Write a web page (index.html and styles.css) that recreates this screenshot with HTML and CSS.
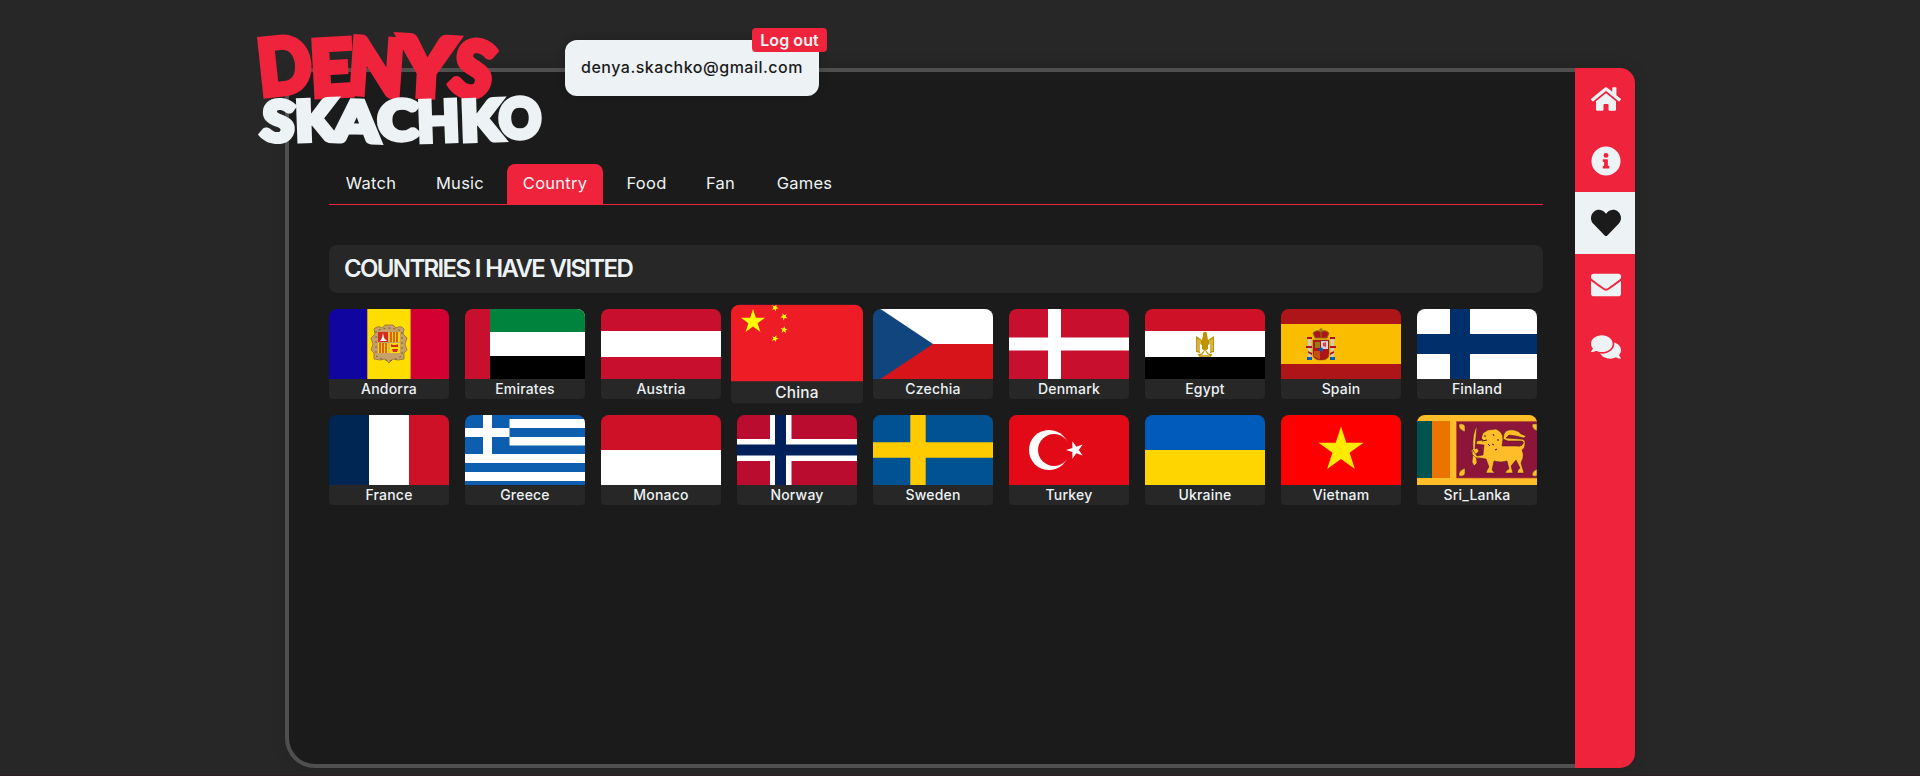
FILE: index.html
```html
<!DOCTYPE html>
<html lang="en">
<head>
<meta charset="utf-8">
<title>Denys Skachko</title>
<link rel="stylesheet" href="styles.css">
</head>
<body>
<div class="frame">
  <svg class="logo" viewBox="0 0 960 420">
    <g class="logo-first" text-anchor="middle">
      <text transform="translate(142 219) rotate(-6)" textLength="160" lengthAdjust="spacingAndGlyphs">D</text>
      <text transform="translate(279 226) rotate(-3)" textLength="128" lengthAdjust="spacingAndGlyphs">E</text>
      <text transform="translate(404 223) rotate(4)" textLength="166" lengthAdjust="spacingAndGlyphs">N</text>
      <text class="tall" transform="translate(556 228) rotate(3)" textLength="172" lengthAdjust="spacingAndGlyphs">Y</text>
      <text transform="translate(680 227) rotate(14)" textLength="122" lengthAdjust="spacingAndGlyphs">S</text>
    </g>
    <g class="logo-last" text-anchor="middle">
      <text transform="translate(109 363) rotate(6)" textLength="98" lengthAdjust="spacingAndGlyphs">S</text>
      <text transform="translate(229 361) rotate(-2)" textLength="124" lengthAdjust="spacingAndGlyphs">K</text>
      <text transform="translate(348 364) rotate(2)" textLength="136" lengthAdjust="spacingAndGlyphs">A</text>
      <text transform="translate(474 359)" textLength="122" lengthAdjust="spacingAndGlyphs">C</text>
      <text transform="translate(597 363) rotate(-2)" textLength="126" lengthAdjust="spacingAndGlyphs">H</text>
      <text transform="translate(726 361) rotate(-2)" textLength="124" lengthAdjust="spacingAndGlyphs">K</text>
      <text transform="translate(840 355)" textLength="126" lengthAdjust="spacingAndGlyphs">O</text>
    </g>
  </svg>
  <div class="account"><span>denya.skachko@gmail.com</span><button class="logout">Log out</button></div>
  <main class="content">
    <div class="tabs">
      <a class="tab t-watch">Watch</a><a class="tab t-music">Music</a><a class="tab t-country active">Country</a><a class="tab t-food">Food</a><a class="tab t-fan">Fan</a><a class="tab t-games">Games</a>
    </div>
    <h1 class="heading"><span>COUNTRIES I HAVE VISITED</span></h1>
    <div class="flags">
      <div class="card"><svg viewBox="0 0 120 70"><path fill="#10069f" d="M0 0h39v70H0z"/><path fill="#fedd00" d="M38.500 0h43v70h-43z"/><path fill="#d50032" d="M81.500 0H120v70H81.500z"/><path fill="#d5a12a" d="M38 0h.8v70H38zM81 0h.8v70H81z"/>
        <path fill="#c6a068" stroke="#94703e" stroke-width=".8" d="M45 20q4-4 8-1l3-3h8l3 3q5-3 8 1l-1 5 4 4-2 6 2 6-3 3v6l-6 1-5-1-4 4-4-4-5 1-6-1v-6l-3-3 2-6-2-6 4-4z"/><path fill="none" stroke="#7d5c38" stroke-width="1" stroke-dasharray="2 3" d="M47 22v25l6 3 7 2 7-2 6-3V22l-6-2-7-1-7 1z"/><path fill="#fedd00" d="M49 23h22v21H49z"/><path fill="#d52b1e" d="M49 23h10v10H49z"/><path stroke="#d52b1e" stroke-width="1.400" d="M62 23v10m3-10v10m3-10v10M51 34v10m3-10v10m3-10v10"/><path fill="#fff" d="m51 32 2-3 1-5 1 5 3 3z"/><path fill="#d52b1e" d="M62 35l2 1h3l2-1v3h-7zm1 5h6l-1 3h-4z"/><path fill="none" stroke="#c6a068" d="M60 23v21M49 33.500h22"/></svg><p>Andorra</p></div>
      <div class="card"><svg viewBox="0 0 120 70"><path fill="#fff" d="M25 0h95v70H25z"/><path fill="#00843d" d="M25 0h95v23H25z"/><path d="M25 47h95v23H25z"/><path fill="#c8102e" d="M0 0h25v70H0z"/></svg><p>Emirates</p></div>
      <div class="card"><svg viewBox="0 0 120 70"><path fill="#c8102e" d="M0 0h120v70H0z"/><path fill="#fff" d="M0 22h120v26H0z"/></svg><p>Austria</p></div>
      <div class="card hovered"><svg viewBox="0 0 120 70"><defs><path id="star" d="M0-1 .2245-.309.951-.309.363.118.588.809 0 .382-.588.809-.363.118-.951-.309-.2245-.309z"/></defs><path fill="#ee1c25" d="M0 0h120v70H0z"/><g fill="#ff0"><use href="#star" transform="translate(20 15.700) scale(11.500)"/><use href="#star" transform="translate(40 3) rotate(24) scale(3.500)"/><use href="#star" transform="translate(48.200 11) rotate(45) scale(3.500)"/><use href="#star" transform="translate(48.200 23) scale(3.500) rotate(6)"/><use href="#star" transform="translate(40 31) rotate(22) scale(3.500)"/></g></svg><p>China</p></div>
      <div class="card"><svg viewBox="0 0 120 70"><path fill="#fff" d="M7 0h113v35H7z"/><path fill="#d7141a" d="M7 35h113v35H7z"/><path fill="#11457e" d="M0 0h7.500L60 35 7.500 70H0z"/></svg><p>Czechia</p></div>
      <div class="card"><svg viewBox="0 0 120 70"><path fill="#c8102e" d="M0 0h120v70H0z"/><path fill="#fff" d="M39 0h13v70H39z"/><path fill="#fff" d="M0 28.500h120v13H0z"/></svg><p>Denmark</p></div>
      <div class="card"><svg viewBox="0 0 120 70"><path fill="#ce1126" d="M0 0h120v22H0z"/><path fill="#fff" d="M0 22h120v26H0z"/><path d="M0 48h120v22H0z"/><path fill="#c09300" d="M51 27l6 4 1-5q-1-2 1-3 3-1 3 2l1 6 6-4v16l-4 1v-9l-2 1v4l-3 2-3-2v-4l-2-1v9l-4-1z"/><path stroke="#fff" stroke-width=".6" d="M53 30v12m2-11v12m10-12v12m2-13v12"/><path fill="none" stroke="#c09300" stroke-width="1.300" d="M53 46l4-1 2-3m8 4-4-1-2-3M54 47h12"/></svg><p>Egypt</p></div>
      <div class="card"><svg viewBox="0 0 120 70"><path fill="#ad1519" d="M0 0h120v70H0z"/><path fill="#fabd00" d="M0 15h120v40H0z"/><path fill="#ccc" d="M27 30h3v20h-3zM50 30h3v20h-3z"/><path fill="#ad1519" d="M26 28h5v2h-5zm23 0h5v2h-5zM25 37h6v2h-6zm24 0h6v2h-6zm-22 5 4 2v2l-4-2zm26 0-4 2v2l4-2z"/><path fill="#005bbf" d="M26 48h5v3h-5zm23 0h5v3h-5z"/><path fill="#ad1519" stroke="#704214" stroke-width=".5" d="M32 31h16v14q0 6-8 6t-8-6z"/><path fill="#9b7a12" d="M34 33h5v6h-5z"/><path fill="#d6cdd8" d="M40 32h7v8h-7z"/><path fill="#db4446" d="M42 34l3-1v5l-3-1z"/><path stroke="#e6b000" stroke-width=".8" d="M34 42v6m2-6v7m2-7v8"/><circle cx="40" cy="40.500" r="2" fill="#005bbf"/><path fill="#ad1519" stroke="#8a6914" stroke-width="1" d="M34 29l-2-5q4-4 8-1 4-3 8 1l-2 5z"/><path stroke="#8a6914" stroke-width="1.200" d="M40 19v9m-2-7h4"/></svg><p>Spain</p></div>
      <div class="card"><svg viewBox="0 0 120 70"><path fill="#fff" d="M0 0h120v70H0z"/><path fill="#002f6c" d="M33 0h20v25h67v20H53v25H33V45H0V25h33z"/></svg><p>Finland</p></div>
      <div class="card"><svg viewBox="0 0 120 70"><path fill="#fff" d="M40 0h40v70H40z"/><path fill="#002654" d="M0 0h40v70H0z"/><path fill="#ce1126" d="M80 0h40v70H80z"/></svg><p>France</p></div>
      <div class="card"><svg viewBox="0 0 120 70"><path fill="#fff" d="M18 0h9v4h93v66H0V13h18z"/><path fill="#0d5eaf" d="M0 0h18v13H0zM27 0h93v4H44.500v9H27zM44.500 13H120v9H44.500zM0 22h18v17H0zM27 22h17.500v8.500H120V39H27zM0 48h120v9H0zM0 66h120v4H0z"/></svg><p>Greece</p></div>
      <div class="card"><svg viewBox="0 0 120 70"><path fill="#fff" d="M0 35h120v35H0z"/><path fill="#ce1126" d="M0 0h120v35H0z"/></svg><p>Monaco</p></div>
      <div class="card"><svg viewBox="0 0 120 70"><path fill="#ba0c2f" d="M0 0h120v70H0z"/><path fill="#fff" d="M33 0h21.500v24H120v22H54.500v24H33V46H0V24h33z"/><path fill="#00205b" d="M38 0h11v29.500h71v11H49V70H38V40.500H0v-11h38z"/></svg><p>Norway</p></div>
      <div class="card"><svg viewBox="0 0 120 70"><path fill="#005293" d="M0 0h120v70H0z"/><path fill="#fecb00" d="M37.300 0h15.400v27.300H120v15.400H52.700V70H37.300V42.700H0V27.300h37.300z"/></svg><p>Sweden</p></div>
      <div class="card"><svg viewBox="0 0 120 70"><path fill="#e30a17" d="M0 0h120v70H0z"/><circle cx="40" cy="35" r="20" fill="#fff"/><circle cx="45" cy="35" r="16" fill="#e30a17"/><use href="#star" fill="#fff" transform="translate(66.200 35) rotate(-90) scale(9.200)"/></svg><p>Turkey</p></div>
      <div class="card"><svg viewBox="0 0 120 70"><path fill="#005bbb" d="M0 0h120v35H0z"/><path fill="#ffd500" d="M0 35h120v35H0z"/></svg><p>Ukraine</p></div>
      <div class="card"><svg viewBox="0 0 120 70"><path fill="red" d="M0 0h120v70H0z"/><use href="#star" fill="#ffeb00" transform="translate(60 35) scale(23.600)"/></svg><p>Vietnam</p></div>
      <div class="card"><svg viewBox="0 0 120 70"><path fill="#ffbe29" d="M0 0h120v70H0z"/><path fill="#00534e" d="M0 6h15v57H0z"/><path fill="#eb7400" d="M15 6h18v57H15z"/><path fill="#8d153a" stroke="#b64b2d" stroke-width=".7" d="M39.500 6.500H121v56.500H39.500z"/>
        <g fill="#ffbe29" stroke="#45152a" stroke-width=".5"><path d="M42 9q5-1 6 2v6q-5-2-6-5zM42 61q5 1 6-2v-6q-5 2-6 5zM120 9q-4-1-5 1 0 4 5 6zM120 61q-4 1-5-1 0-4 5-6z"/><path d="M60 11q-5 7-4 23l-2 2 2 3-1 8 2 4 3-3-1-9 3-3-2-3-2 1q1-12 2-23z"/><path d="M64 24l2-6 5-3 8-1q7 3 7 10l-1 7h15q3 1 5-1 3-3 0-4H91l-5-2 1-5q2-5 10-4 5 1 7 4l5 2-2 2-8-2-7-1-3 3 14 1q6 0 5 5 0 4-3 6 2 4 1 8l-2 5 3 10h-7l1-3 2-2-4-8-5 6 2 7h-8l2-3 2-1-2-8q-6 2-13 0l-2 9 3 3h-9l1-3 2-3-3-8-6-1q-5 1-8-4l1-4 4 6 6-1 1-10-8-1 1-3 6-1-2-2z"/></g><path fill="none" stroke="#45152a" stroke-width="1" d="M67 21h2m-4 5 5-1m1 4 2 2m3-12 1 2m4 3v2m-6 3 2 1m1 5 2-1"/></svg><p>Sri_Lanka</p></div>
    </div>
  </main>
  <nav class="side">
    <a><svg viewBox="0 0 576 512"><path d="M280.400 148.300 96 300.100V464a16 16 0 0 0 16 16l112-.3a16 16 0 0 0 16-16V368a16 16 0 0 1 16-16h64a16 16 0 0 1 16 16v95.600a16 16 0 0 0 16 16.100l112 .3a16 16 0 0 0 16-16V300L295.700 148.300a12.200 12.200 0 0 0-15.300 0zM571.600 251.500 488 182.600V44a12 12 0 0 0-12-12h-56a12 12 0 0 0-12 12v72.600L318.500 43a48 48 0 0 0-61 0L4.300 251.500a12 12 0 0 0-1.600 16.900l25.500 31a12 12 0 0 0 16.900 1.600l235.200-193.700a12.200 12.200 0 0 1 15.300 0L530.900 301a12 12 0 0 0 16.900-1.600l25.500-31a12 12 0 0 0-1.700-16.900z"/></svg></a>
    <a><svg viewBox="0 0 512 512"><path fill-rule="evenodd" d="M256 8a248 248 0 1 0 0 496 248 248 0 0 0 0-496zm0 110a42 42 0 1 1 0 84 42 42 0 0 1 0-84zm56 254a12 12 0 0 1-12 12h-88a12 12 0 0 1-12-12v-24a12 12 0 0 1 12-12h12v-64h-12a12 12 0 0 1-12-12v-24a12 12 0 0 1 12-12h64a12 12 0 0 1 12 12v100h12a12 12 0 0 1 12 12z"/></svg></a>
    <a class="active"><svg viewBox="0 0 512 512"><path d="M462.300 62.600C407.500 15.900 326 24.300 275.700 76.200L256 96.500l-19.700-20.300C186.100 24.300 104.500 15.900 49.700 62.600c-62.800 53.600-66.100 149.800-9.900 207.900l193.500 199.800c12.500 12.900 32.800 12.900 45.300 0l193.500-199.800c56.300-58.100 53-154.300-9.800-207.900z"/></svg></a>
    <a><svg viewBox="0 0 512 512"><path d="M502.300 190.800c3.900-3.100 9.700-.2 9.700 4.700V400a48 48 0 0 1-48 48H48a48 48 0 0 1-48-48V195.600c0-5 5.700-7.800 9.700-4.700 22.400 17.400 52.100 39.500 154.100 113.600 21.100 15.400 56.700 47.800 92.200 47.600 35.700.3 72-32.800 92.300-47.600 102-74.100 131.600-96.300 154-113.700zM256 320c23.200.4 56.600-29.200 73.400-41.400 132.700-96.300 142.800-104.700 173.400-128.700A24 24 0 0 0 512 131v-19a48 48 0 0 0-48-48H48a48 48 0 0 0-48 48v19c0 7.400 3.400 14.300 9.200 18.900 30.600 23.900 40.700 32.400 173.400 128.700 16.800 12.200 50.200 41.800 73.400 41.400z"/></svg></a>
    <a><svg viewBox="0 0 576 512"><path d="M416 192c0-88.400-93.100-160-208-160S0 103.600 0 192c0 34.300 14.100 65.900 38 92-13.400 30.200-35.500 54.200-35.800 54.500A8 8 0 0 0 8 352c36.600 0 66.900-12.300 88.700-25 32.200 15.700 70.300 25 111.300 25 114.900 0 208-71.600 208-160zm122 220c23.900-26 38-57.700 38-92 0-66.900-53.500-124.200-129.300-148.100.9 6.600 1.300 13.300 1.300 20.100 0 105.900-107.700 192-240 192-10.800 0-21.300-.8-31.700-1.900C207.800 439.600 281.800 480 368 480c41 0 79.100-9.200 111.300-25 21.800 12.700 52.100 25 88.700 25a8 8 0 0 0 5.800-13.500c-.3-.3-22.400-24.200-35.800-54.500z"/></svg></a>
  </nav>
</div>
</body>
</html>
```
FILE: styles.css
```css
* { box-sizing: border-box; margin: 0; }
body {
  height: 776px;
  padding-top: 68px;
  background: #272727;
  border-bottom: 1px solid #2a1f25;
  color: #edf2f4;
  font-family: Inter, "Open Sans", sans-serif;
  overflow: hidden;
}
.frame {
  position: relative;
  display: flex;
  width: 1350px;
  height: 700px;
  margin: 0 auto;
  border-radius: 15px 15px 15px 30px;
  box-shadow: 0 0 16px rgba(0, 0, 0, .12);
}
.content {
  flex: 1;
  padding: 92px 32px 0 40px;
  background: #1b1b1b;
  border: 4px solid #4f4f4f;
  border-right: 0;
  border-radius: 30px 0 0 30px;
}
.logo { position: absolute; left: -45px; top: -48px; width: 320px; height: 140px; overflow: visible; }
.logo text { font-family: Lato, sans-serif; font-weight: 900; stroke-width: 19px; }
.logo-first { fill: #ef233c; stroke: #ef233c; font-size: 230px; }
.logo-first .tall { font-size: 244px; }
.logo-last { fill: #edf2f4; stroke: #edf2f4; font-size: 166px; }
.logo .logo-last text { stroke-width: 16px; }
.account {
  position: absolute;
  left: 280px;
  top: -28px;
  width: 254px;
  height: 56px;
  border-radius: 12px;
  background: #edf2f4;
  color: #1b1b1b;
  font-size: 16px;
  font-weight: 500;
  line-height: 54px;
  text-align: center;
  letter-spacing: .5px;
  white-space: nowrap;
  box-shadow: 0 0 8px rgba(0, 0, 0, .2);
}
.logout {
  position: absolute;
  left: 187px;
  top: -12px;
  width: 75px;
  height: 24px;
  padding: 0;
  border: 0;
  border-radius: 4px;
  background: #ef233c;
  color: #edf2f4;
  font: 600 16px/23px Inter, sans-serif;
  letter-spacing: .1px;
}
.tabs {
  display: flex;
  gap: 8px;
  height: 41px;
  border-bottom: 1px solid #ef233c;
}
.tab {
  height: 40px;
  border-radius: 8px 8px 0 0;
  font-size: 16.5px;
  line-height: 39px;
  letter-spacing: .25px;
  text-align: center;
}
.tab.active { background: #ef233c; }
.t-watch { width: 84px; }
.t-music { width: 78px; }
.t-country { width: 96px; }
.t-food { width: 71px; }
.t-fan { width: 61px; }
.t-games { width: 91px; }
.heading {
  height: 48px;
  margin: 40px 0 16px;
  padding-left: 15px;
  border-radius: 8px;
  background: #272727;
  font-size: 24px;
  font-weight: 600;
  line-height: 48px;
  letter-spacing: -1.65px;
  word-spacing: 1px;
}
.flags { display: flex; flex-wrap: wrap; gap: 16px; }
.card {
  width: 120px;
  height: 90px;
  overflow: hidden;
  border-radius: 8px 8px 4px 4px;
  background: #272727;
}
.card svg { display: block; width: 120px; height: 70px; }
.card p { font-size: 14px; font-weight: 500; line-height: 20px; letter-spacing: .2px; text-align: center; }
.card.hovered { transform: scale(1.1); }
.side {
  width: 60px;
  overflow: hidden;
  border-radius: 0 15px 15px 0;
  background: #ef233c;
}
.side a { display: flex; align-items: center; justify-content: center; height: 62px; padding-left: 2px; }
.side svg { width: 30px; height: 30px; fill: #edf2f4; }
.side .active { background: #edf2f4; }
.side .active svg { fill: #1b1b1b; }
```
